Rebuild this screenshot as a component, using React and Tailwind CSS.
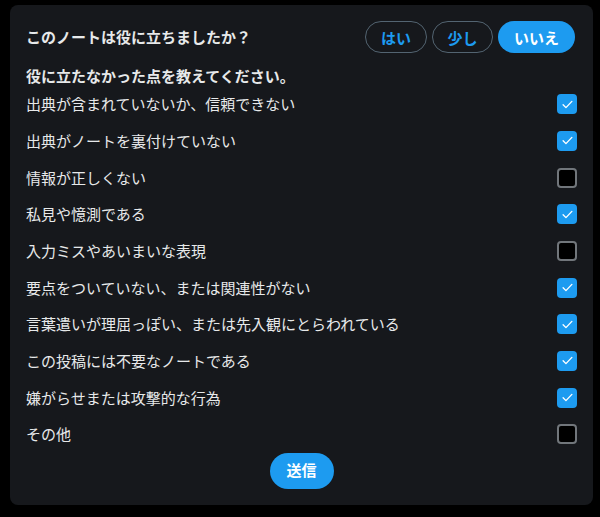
import React, { useState } from 'react'
import clsx from 'clsx'

const reasons = [
  { label: '出典が含まれていないか、信頼できない', checked: true },
  { label: '出典がノートを裏付けていない', checked: true },
  { label: '情報が正しくない', checked: false },
  { label: '私見や憶測である', checked: true },
  { label: '入力ミスやあいまいな表現', checked: false },
  { label: '要点をついていない、または関連性がない', checked: true },
  { label: '言葉遣いが理屈っぽい、または先入観にとらわれている', checked: true },
  { label: 'この投稿には不要なノートである', checked: true },
  { label: '嫌がらせまたは攻撃的な行為', checked: true },
  { label: 'その他', checked: false },
]

function Check({ checked, onChange }) {
  return (
    <button
      type="button"
      onClick={() => onChange(!checked)}
      className={clsx(
        'w-5 h-5 rounded-[4px] flex items-center justify-center flex-shrink-0',
        checked ? 'bg-[#1d9bf0]' : 'bg-black border-2 border-[#71767b]',
      )}
    >
      {checked && (
        <svg viewBox="0 0 24 24" className="w-[15px] h-[15px]" fill="none" stroke="white" strokeWidth="2.2" strokeLinecap="round" strokeLinejoin="round">
          <path d="M5 12.5l4.5 4.5L19 7" />
        </svg>
      )}
    </button>
  )
}

export default function App() {
  const [items, setItems] = useState(reasons)
  const [answer, setAnswer] = useState('no')

  return (
    <div
      className="min-h-[517px] bg-black pt-[5px] pl-[10px] pr-[7px] text-[#e7e9ea]"
      style={{ fontFamily: '"Noto Sans CJK JP", "Noto Sans", sans-serif' }}
    >
      <div className="bg-[#16181c] rounded-lg px-4 pt-4 pb-4">
        {/* Header */}
        <div className="flex items-center justify-between h-8">
          <h2 className="text-[15px] font-bold leading-5">このノートは役に立ちましたか？</h2>
          <div className="flex gap-[5px] mr-[2px]">
            {[
              { key: 'yes', label: 'はい', w: 'w-[62px]' },
              { key: 'some', label: '少し', w: 'w-[61px]' },
              { key: 'no', label: 'いいえ', w: 'w-[77px]' },
            ].map(b => (
              <button
                key={b.key}
                onClick={() => setAnswer(b.key)}
                className={clsx(
                  'h-8 rounded-full text-[15px] font-bold leading-none',
                  b.w,
                  answer === b.key
                    ? 'bg-[#1d9bf0] text-white'
                    : 'border border-[#536471] text-[#1d9bf0]',
                )}
              >
                {b.label}
              </button>
            ))}
          </div>
        </div>

        <p className="mt-[13px] text-[15px] font-bold leading-5">役に立たなかった点を教えてください。</p>

        {/* Reasons */}
        <div className="flex flex-col">
          {items.map((r, i) => (
            <label key={r.label} className="h-[36.67px] flex items-center justify-between">
              <span className="text-[15px] leading-5">{r.label}</span>
              <Check
                checked={r.checked}
                onChange={v => setItems(items.map((x, j) => (j === i ? { ...x, checked: v } : x)))}
              />
            </label>
          ))}
        </div>

        <div className="flex justify-center">
          <button className="h-9 w-16 rounded-full bg-[#1d9bf0] text-white text-[15px] font-bold">送信</button>
        </div>
      </div>
    </div>
  )
}
